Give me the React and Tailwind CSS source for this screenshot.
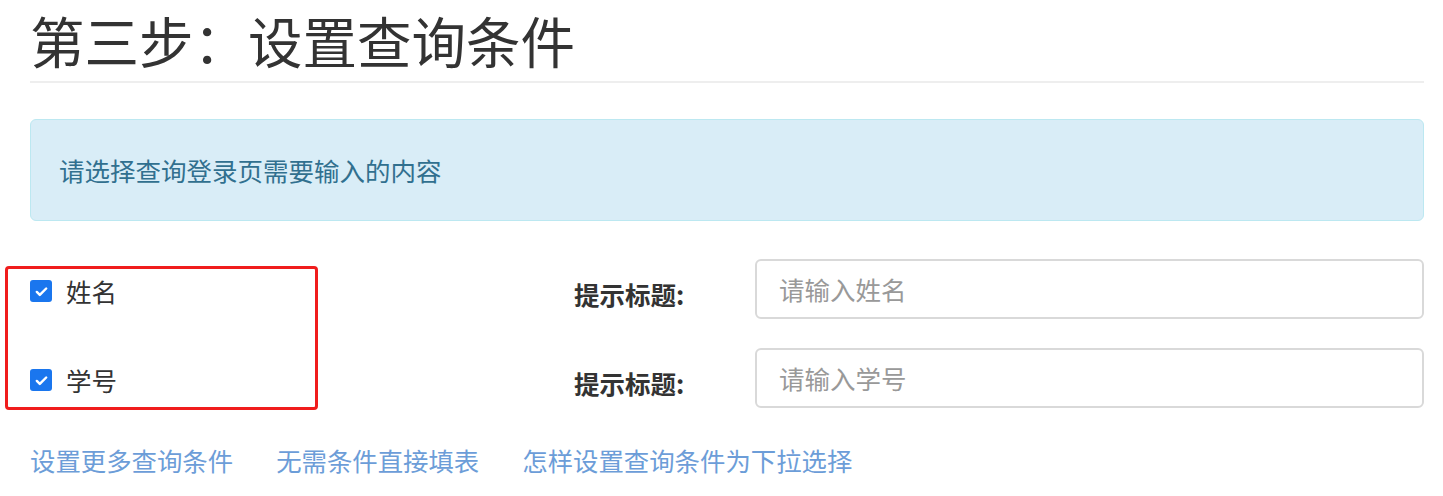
import React from 'react'

const font = { fontFamily: '"Noto Sans CJK SC", "Noto Sans", sans-serif' }

function Check() {
    return (
        <span className="w-[22px] h-[22px] rounded-[3px] bg-[#1a76ee] flex items-center justify-center shrink-0">
            <svg width="15" height="15" viewBox="0 0 16 16" fill="none">
                <path d="M3 8.5l3.2 3.2L13 4.8" stroke="#fff" strokeWidth="2.6" strokeLinecap="round" strokeLinejoin="round" />
            </svg>
        </span>
    )
}

function FieldRow({ label, placeholder, className = '' }) {
    return (
        <div className={`flex items-center ${className}`}>
            <label className="w-[544px] flex items-center gap-[14px] text-[25.5px] leading-[30px] text-[#333] pt-[4px]">
                <Check />
                <span>{label}</span>
            </label>
            <div className="w-[181px] text-[25.5px] font-bold text-[#333] leading-[30px] pt-[10px]">提示标题:</div>
            <div className="flex-1 h-[60px] border-2 border-[#d9d9d9] rounded-[6px] flex items-center px-[22px] text-[25.5px] text-[#999]">
                {placeholder}
            </div>
        </div>
    )
}

export default function App() {
    return (
        <div className="bg-white min-h-[496px] pl-[30px] pr-[19px]" style={font}>
            <h1 className="text-[54.5px] leading-[79px] text-[#333] font-normal">第三步：设置查询条件</h1>
            <div className="mt-[2px] h-[2px] bg-[#eeeeee]" />

            <div className="mt-[36px] h-[102px] bg-[#d9edf7] border border-[#bce8f1] rounded-[6px] flex items-center px-[28px] text-[25.5px] text-[#31708f]">
                请选择查询登录页需要输入的内容
            </div>

            <div className="relative mt-[38px]">
                <FieldRow label="姓名" placeholder="请输入姓名" />
                <FieldRow label="学号" placeholder="请输入学号" className="mt-[29px]" />
                <div className="absolute left-[-25px] top-[7px] w-[313px] h-[144px] border-[3px] border-[#f01d1d] rounded-[4px] pointer-events-none" />
            </div>

            <div className="mt-[37px] flex gap-[43px] text-[25.4px] leading-[30px] text-[#6c9dd8]">
                <a href="#">设置更多查询条件</a>
                <a href="#">无需条件直接填表</a>
                <a href="#">怎样设置查询条件为下拉选择</a>
            </div>
        </div>
    )
}
